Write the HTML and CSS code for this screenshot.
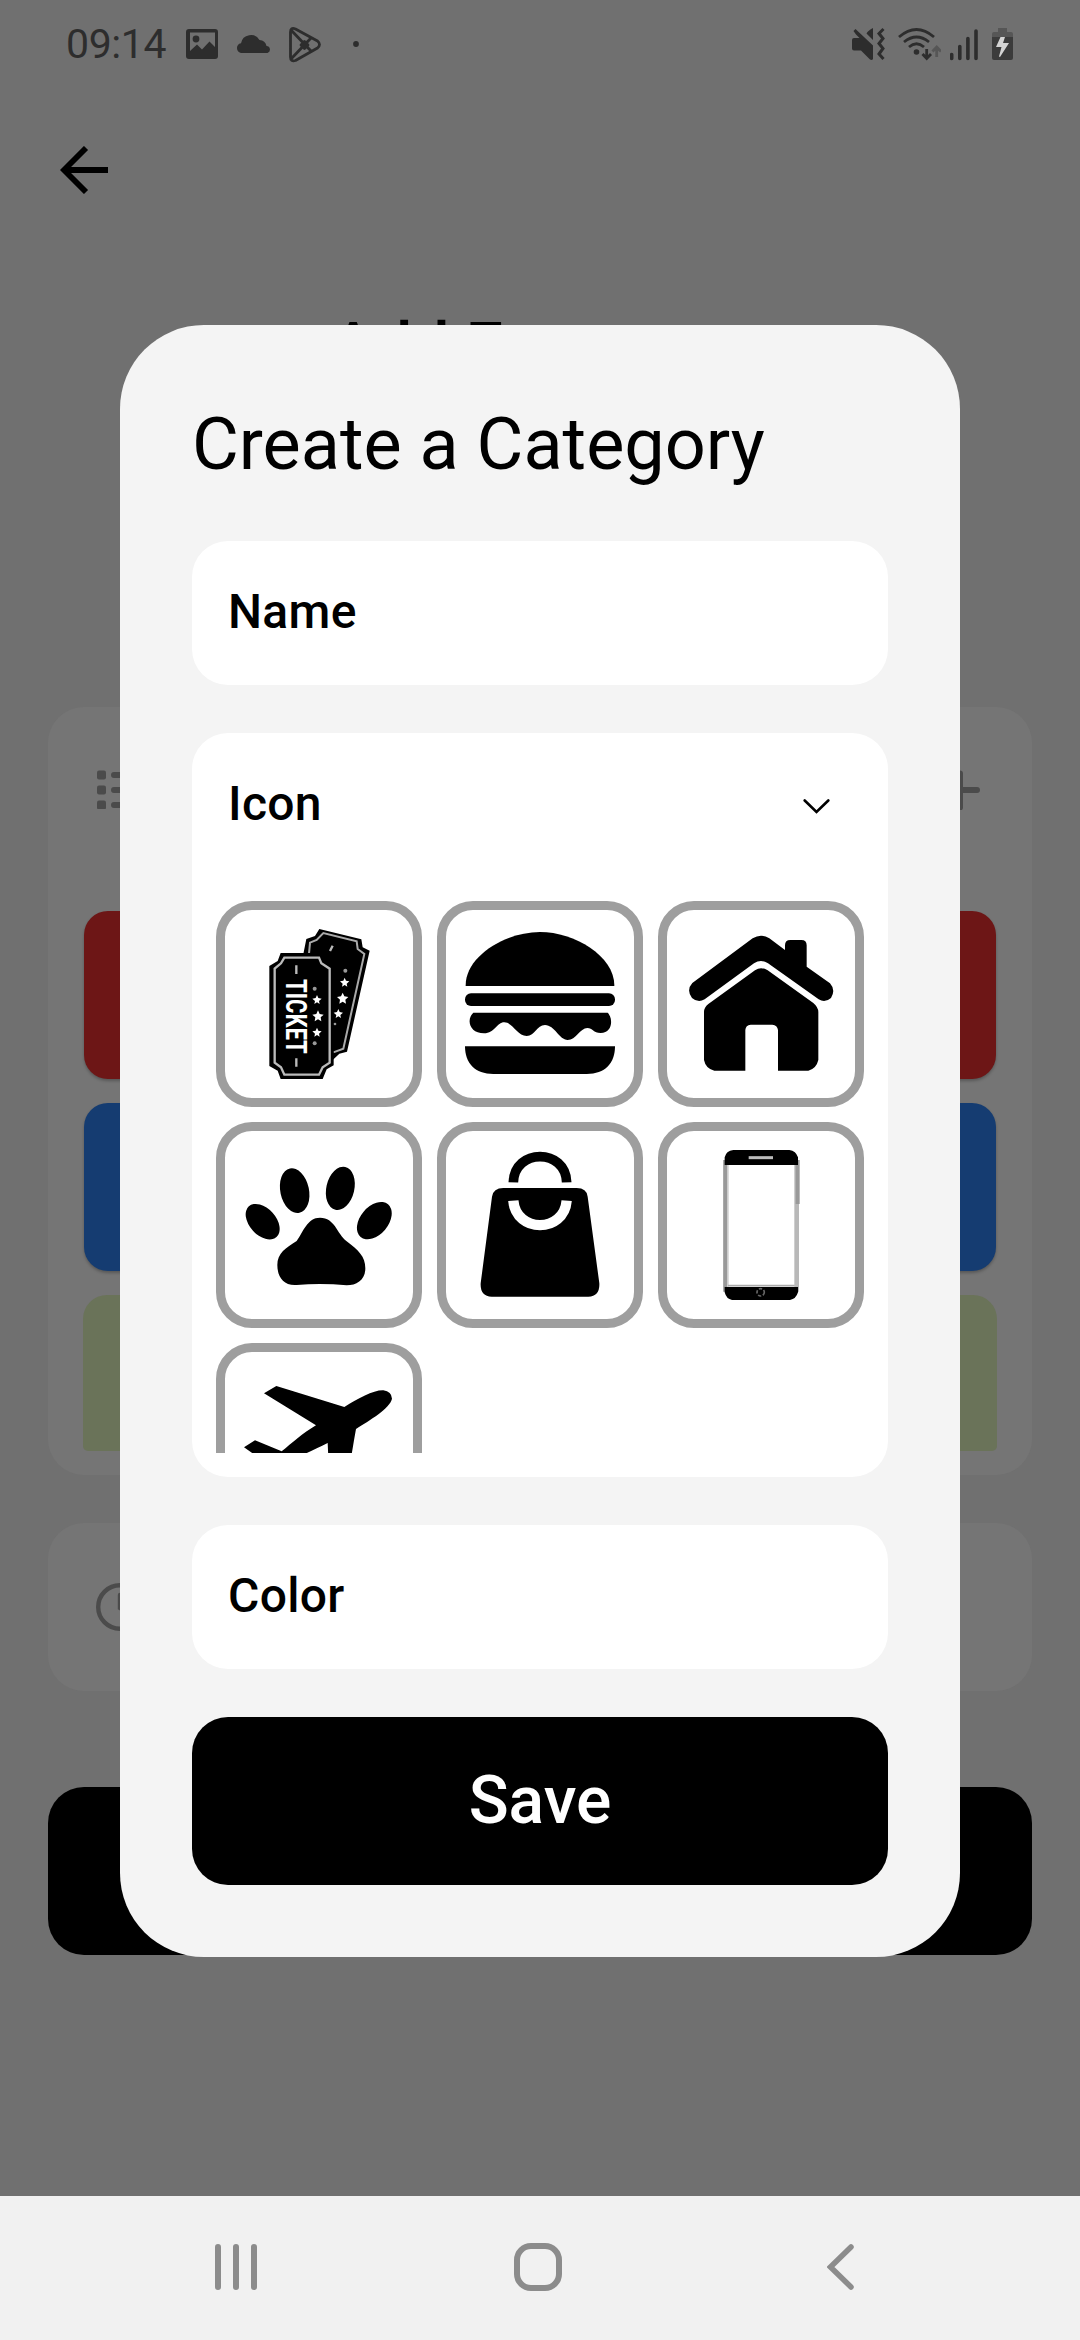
FILE: index.html
```
<!DOCTYPE html>
<html lang="en">
<head>
<meta charset="utf-8">
<title>Create a Category</title>
<link rel="stylesheet" href="styles.css">
</head>
<body>
<div class="screen">
  <header class="status">
    <span class="time">09:14</span>
    <svg class="st-image" viewBox="186 24 32 40" width="32" height="40"><path fill-rule="evenodd" d="M189 29H215Q218 29 218 32V56Q218 59 215 59H189Q186 59 186 56V32Q186 29 189 29ZM190 32.5V51L197 44.500L202 49.500L209.500 41.500L215 47V32.500Z"/><circle cx="196" cy="39" r="3.400"/></svg>
    <svg class="st-cloud" viewBox="236 24 35 40" width="35" height="40"><path d="M241 53A5 5 0 0 1 241 43.200A10 10 0 0 1 259.500 40A7.500 7.500 0 0 1 266.500 46A3.600 3.600 0 0 1 267.500 53Z"/></svg>
    <svg class="st-play" viewBox="289 24 32 40" width="32" height="40"><g fill="none" stroke="#2d2d2d" stroke-width="2.800" stroke-linejoin="round"><path d="M290.500 32Q290.500 27 295.500 29L317.500 41Q321.500 44.500 317.500 48L295.500 60.500Q290.500 62 290.500 57Z"/><path d="M291 30L311 51M291 59L311 38M301 45L304.500 41.500L308 45L304.500 48.500Z"/></g></svg>
    <svg class="st-dot" viewBox="353 24 6 40" width="6" height="40"><circle cx="356" cy="44" r="2.900"/></svg>
    <div class="st-right">
      <svg class="st-mute" viewBox="852 24 33 40" width="33" height="40"><path d="M854 38H859.500L856 34.500 853.500 31 855.500 29 873 45.500V59Q872 60.500 870 59.500L861 50.500H854Q852 50.500 852 48.500V40Q852 38 854 38ZM873 28V40L866.500 33.500Q868 30.500 873 28Z"/><path d="M883.500 29L879 33.500L883 38.500L879 43.500L883 48.500L879 54L883.500 59" fill="none" stroke="#2d2d2d" stroke-width="3"/></svg>
      <svg class="st-wifi" viewBox="898 24 43 40" width="43" height="40"><g fill="none" stroke="#2d2d2d" stroke-width="2.800"><path d="M899 37Q916.500 22 934 37M904 42Q916.500 32 929 42M909 47Q916.500 40.500 924 47"/><path d="M926.700 49V57M922.500 54L926.700 58.500L931 54"/><path stroke="#565656" d="M936.700 57V48M932.500 51.500L936.700 47L941 51.500"/></g><circle cx="916.500" cy="52" r="2.800"/></svg>
      <svg class="st-signal" viewBox="950 24 28 40" width="28" height="40"><path d="M951.700 54.500V58.500M959.800 46.500V58.500M967.900 38.500V58.500M976 31V58.500" stroke="#2d2d2d" stroke-width="3.600" stroke-linecap="round"/></svg>
      <svg class="st-battery" viewBox="992 24 21 40" width="21" height="40"><path fill="#565656" d="M998 32V28H1007V32H1011Q1013 32 1013 34V38H992V34Q992 32 994 32Z"/><path fill="#3b3b3b" d="M992 37H1013V58Q1013 60 1011 60H994Q992 60 992 58Z"/><path fill="#d4d4d4" d="M1000.500 37H1005L1003 43H1009L1000 57L999 56.500L1001.500 47H996Z"/></svg>
    </div>
  </header>
  <svg class="back" viewBox="60 146 48 48" width="48" height="48"><path d="M86 148L64 170L86 192M64 170H108" fill="none" stroke="#000" stroke-width="5.800"/></svg>
  <h1 class="page-title">Add Expenses</h1>
  <section class="categories">
    <div class="cat-head">
      <svg viewBox="97 771 38 39" width="38" height="39" fill="#4b4b4b"><rect x="97" y="771.500" width="9" height="9" rx="2"/><rect x="97" y="786.500" width="9" height="9" rx="2"/><rect x="97" y="801.500" width="9" height="9" rx="2"/><path d="M114 776H132M114 791H132M114 806H132" stroke="#4b4b4b" stroke-width="6" stroke-linecap="round"/></svg>
      <svg viewBox="940 770 40 40" width="40" height="40"><path d="M960 773.500V807.500M943 790H977" stroke="#4b4b4b" stroke-width="6" stroke-linecap="round"/></svg>
    </div>
    <div class="cat-list">
      <div class="cat red"></div>
      <div class="cat blue"></div>
      <div class="cat green"></div>
    </div>
  </section>
  <section class="when"><svg viewBox="96 1583 48 48" width="48" height="48" fill="none" stroke="#4b4b4b"><circle cx="120" cy="1607" r="21.800" stroke-width="4.400"/><path d="M120 1595V1608L129 1613" stroke-width="4.400" stroke-linecap="round"/></svg></section>
  <div class="page-save"></div>

  <div class="overlay">
    <div class="dialog">
      <h2 class="title">Create a Category</h2>
      <div class="field">Name</div>
      <div class="icon-card">
        <div class="icon-head"><span>Icon</span><svg viewBox="0 0 27 15" width="27" height="15"><path d="M1.700 1.500L13.500 13L25.300 1.500" fill="none" stroke="#000" stroke-width="2.600" stroke-linecap="round"/></svg></div>
        <div class="icon-grid">
          <div class="tile"><svg viewBox="192 147 450 450">
            <path d="M418 147L544 178L548 202L569 212L501 515L478 521L455 543L370 480V222L379 177L405 168Z"/>
            <path d="M387 221L390 188L410 180L430 159L530 184L533 207L553 222L490 506L460 517" fill="none" stroke="#aaa" stroke-width="6"/>
            <path d="M302 219H427L436 243L461 258V556L440 568L428 597H302L293 572L268 558V258L293 243Z"/>
            <path d="M313 233H417L424 250L449 266V548L428 562L417 584H313L303 562L284 548V266L303 250Z" fill="none" stroke="#bbb" stroke-width="7"/>
            <path d="M349 256V282M349 535V560M458 197L450 213" stroke="#bbb" stroke-width="7"/>
            <g fill="#fff"><path d="M0 -17L5 -6 17 -4 8 4 10 16 0 10 -10 16 -8 4 -17 -4 -5 -6Z" transform="translate(414 408)"/><path d="M0 -17L5 -6 17 -4 8 4 10 16 0 10 -10 16 -8 4 -17 -4 -5 -6Z" transform="translate(488 355)"/><path d="M0 -14L4 -5 14 -3 6 4 8 13 0 8 -8 13 -6 4 -14 -3 -4 -5Z" transform="translate(411 359)"/><path d="M0 -14L4 -5 14 -3 6 4 8 13 0 8 -8 13 -6 4 -14 -3 -4 -5Z" transform="translate(411 457)"/><path d="M0 -14L4 -5 14 -3 6 4 8 13 0 8 -8 13 -6 4 -14 -3 -4 -5Z" transform="translate(494 307)"/><path d="M0 -14L4 -5 14 -3 6 4 8 13 0 8 -8 13 -6 4 -14 -3 -4 -5Z" transform="translate(475 401)"/></g>
            <g fill="#999"><circle cx="404" cy="326" r="6"/><circle cx="404" cy="490" r="6"/><circle cx="496" cy="272" r="6"/><circle cx="465" cy="432" r="4"/></g>
            <text class="ticket" transform="translate(318 297) rotate(90)" textLength="224" lengthAdjust="spacingAndGlyphs">TICKET</text></svg></div>
          <div class="tile"><svg viewBox="855 147 450 450"><path d="M857 318C855 230 975 156 1080 156S1305 230 1303 318Z"/><rect x="855" y="340" width="450" height="38" rx="18"/><path d="M880 398H1283C1300 415 1298 459 1262 459C1240 459 1238 444 1222 444C1200 444 1188 480 1163 480C1138 480 1124 435 1095 435C1070 435 1065 468 1040 468C1012 468 998 427 973 427C950 427 945 460 912 460C870 460 857 420 880 398Z"/><path d="M855 499H1305C1305 550 1275 582 1220 582H940C885 582 855 550 855 499Z"/></svg></div>
          <div class="tile"><svg viewBox="138 147 450 450"><path d="M157 309L338 175Q363 159 388 175L435 210V196Q435 180 451 180H484Q500 180 500 196V260L570 310Q588 330 573 354Q555 370 536 358L384 250Q363 236 342 250L194 358Q174 370 156 354Q138 330 157 309Z"/><path d="M345 271Q363 259 383 271L520 369Q535 382 535 396V540Q529 566 505 572H414V450Q412 435 397 434H332Q317 435 316 450V572H223Q197 566 192 540V396Q192 382 205 372Z"/></svg></div>
          <div class="tile"><svg viewBox="132 120 450 450"><ellipse cx="188" cy="335" rx="40" ry="62" transform="rotate(-42 188 335)"/><ellipse cx="284" cy="242" rx="43" ry="68" transform="rotate(-12 284 242)"/><ellipse cx="421" cy="235" rx="42" ry="66" transform="rotate(13 421 235)"/><ellipse cx="523" cy="332" rx="42" ry="64" transform="rotate(40 523 332)"/><path d="M360 323C405 323 410 370 440 394C475 420 496 440 496 475C496 510 470 526 440 526Q365 519 290 525C250 528 232 500 232 465C232 430 258 413 290 393C310 365 322 323 360 323Z"/></svg></div>
          <div class="tile"><svg viewBox="795 120 450 450"><path d="M940 217C943 114 1097 114 1100 217" fill="none" stroke="#000" stroke-width="29"/><path d="M910 234H1130Q1160 234 1163 260L1198 520Q1200 558 1165 560H875Q840 558 842 520L876 260Q880 234 910 234Z"/><path d="M940 272C948 370 1092 370 1100 272" fill="none" stroke="#fff" stroke-width="31"/></svg></div>
          <div class="tile"><svg viewBox="138 120 450 450"><path d="M256 150V545" stroke="#999" stroke-width="13"/><path d="M264 160V530" stroke="#ccc" stroke-width="4"/><path d="M470 150V545" stroke="#b8b8b8" stroke-width="14"/><path d="M473 150V282" stroke="#999" stroke-width="12"/><path d="M264 527H464" stroke="#aaa" stroke-width="5"/><path d="M254 165V142Q258 123 280 120H448Q468 123 474 142V165ZM254 531H474V547Q468 567 450 570H276Q259 567 254 547Z"/><path d="M326 143H399" stroke="#bbb" stroke-width="9"/><circle cx="362" cy="547" r="11" fill="none" stroke="#666" stroke-width="5" stroke-dasharray="10 5"/></svg></div>
          <div class="tile"><svg viewBox="132 783 450 450"><path d="M192 850L229 828L433 891C475 865 520 840 550 841Q575 845 576 866C570 895 510 930 468 957C458 1010 450 1080 430 1130L390 1150L383 999C350 1015 320 1030 295 1040L270 1150L245 1160L230 1080L132 1012L165 991L245 1024C275 1000 310 968 348 946Z"/></svg></div>
        </div>
      </div>
      <div class="field">Color</div>
      <div class="save">Save</div>
    </div>
  </div>
  <nav class="navbar">
    <svg class="n-recent" viewBox="215 2243 42 48" width="42" height="48"><path d="M218 2247V2287M236 2247V2287M254 2247V2287" stroke="#8c8c8c" stroke-width="6" stroke-linecap="round"/></svg>
    <svg class="n-home" viewBox="514 2243 48 48" width="48" height="48"><rect x="517" y="2246" width="42" height="42" rx="14" fill="none" stroke="#8c8c8c" stroke-width="6"/></svg>
    <svg class="n-back" viewBox="827 2243 27 48" width="27" height="48"><path d="M851 2247L830.500 2267L851 2287" fill="none" stroke="#8c8c8c" stroke-width="5.500" stroke-linecap="round"/></svg>
  </nav>
</div>
</body>
</html>
```
FILE: styles.css
```
* { box-sizing: border-box; }
body { margin: 0; font-family: Roboto, sans-serif; }
svg { display: block; flex: none; }
h1, h2 { margin: 0; }
.screen { position: relative; width: 1080px; height: 2340px; overflow: hidden; background: #707070; display: flex; flex-direction: column; }

.status { display: flex; height: 88px; padding: 24px 67px 0 66px; align-items: flex-start; fill: #2d2d2d; color: #2d2d2d; }
.time { width: 120px; font-size: 41px; line-height: 41px; letter-spacing: -.4px; }
.st-cloud, .st-play { margin-left: 18px; }
.st-dot { margin-left: 32px; }
.st-right { display: flex; margin-left: auto; }
.st-wifi { margin-left: 13px; }
.st-signal { margin-left: 9px; }
.st-battery { margin-left: 14px; }

.back { margin: 58px 0 0 60px; }
.page-title { height: 80px; margin: 114px 0 319px; text-align: center; font-size: 66px; line-height: 80px; font-weight: 500; }
.categories { height: 768px; margin: 0 48px; padding: 0 36px 24px; border-radius: 36px; background: #757575; flex: none; }
.cat-head { display: flex; justify-content: space-between; height: 204px; padding: 63px 16px 0 13px; }
.cat-list { height: 540px; margin: 0 -6px; padding: 0 6px; overflow: hidden; }
.cat { height: 168px; margin-bottom: 24px; border-radius: 24px; box-shadow: 0 2px 3px rgba(0, 0, 0, .25); }
.red { background: #6d1616; }
.blue { background: #153c71; }
.green { height: 156px; margin: 0 -1px; border-radius: 24px 24px 5px 5px; background: #6a7359; box-shadow: none; }
.when { height: 168px; margin: 48px 48px 96px; padding: 60px 48px; border-radius: 36px; background: #757575; flex: none; }
.page-save { height: 168px; margin: 0 48px; border-radius: 36px; background: #000; flex: none; }

.overlay { position: absolute; inset: 0 0 144px; padding: 325px 120px 0; }
.dialog { display: flex; flex-direction: column; gap: 48px; height: 1632px; padding: 72px; border-radius: 84px; background: #f4f4f4; color: #000; }
.title { height: 96px; font-size: 72px; line-height: 95px; font-weight: 400; white-space: nowrap; }
.field { height: 144px; padding-left: 36px; border-radius: 36px; background: #fff; font-size: 48px; line-height: 142px; font-weight: 500; letter-spacing: .3px; }
.icon-card { height: 744px; padding: 0 24px 24px; border-radius: 36px; background: #fff; }
.icon-head { display: flex; justify-content: space-between; align-items: center; height: 144px; padding: 0 34px 0 12px; font-size: 48px; line-height: 142px; font-weight: 500; letter-spacing: .3px; }
.icon-head span { height: 144px; }
.icon-head svg { margin-top: 3px; }
.icon-grid { display: grid; grid-template-columns: repeat(3, 206px); grid-auto-rows: 206px; gap: 15px; height: 576px; padding-top: 24px; overflow: hidden; }
.tile { display: grid; place-items: center; border: 9px solid #9e9e9e; border-radius: 36px; }
.tile svg { width: 150px; height: 150px; }
.ticket { font-size: 89px; font-weight: 700; fill: #fff; }
.save { height: 168px; border-radius: 36px; background: #000; color: #fff; font-size: 66px; line-height: 168px; font-weight: 500; text-align: center; }

.navbar { display: flex; height: 144px; margin-top: auto; padding: 47px 0 0 215px; background: #f1f1f1; }
.n-home { margin-left: 257px; }
.n-back { margin-left: 265px; }
```
